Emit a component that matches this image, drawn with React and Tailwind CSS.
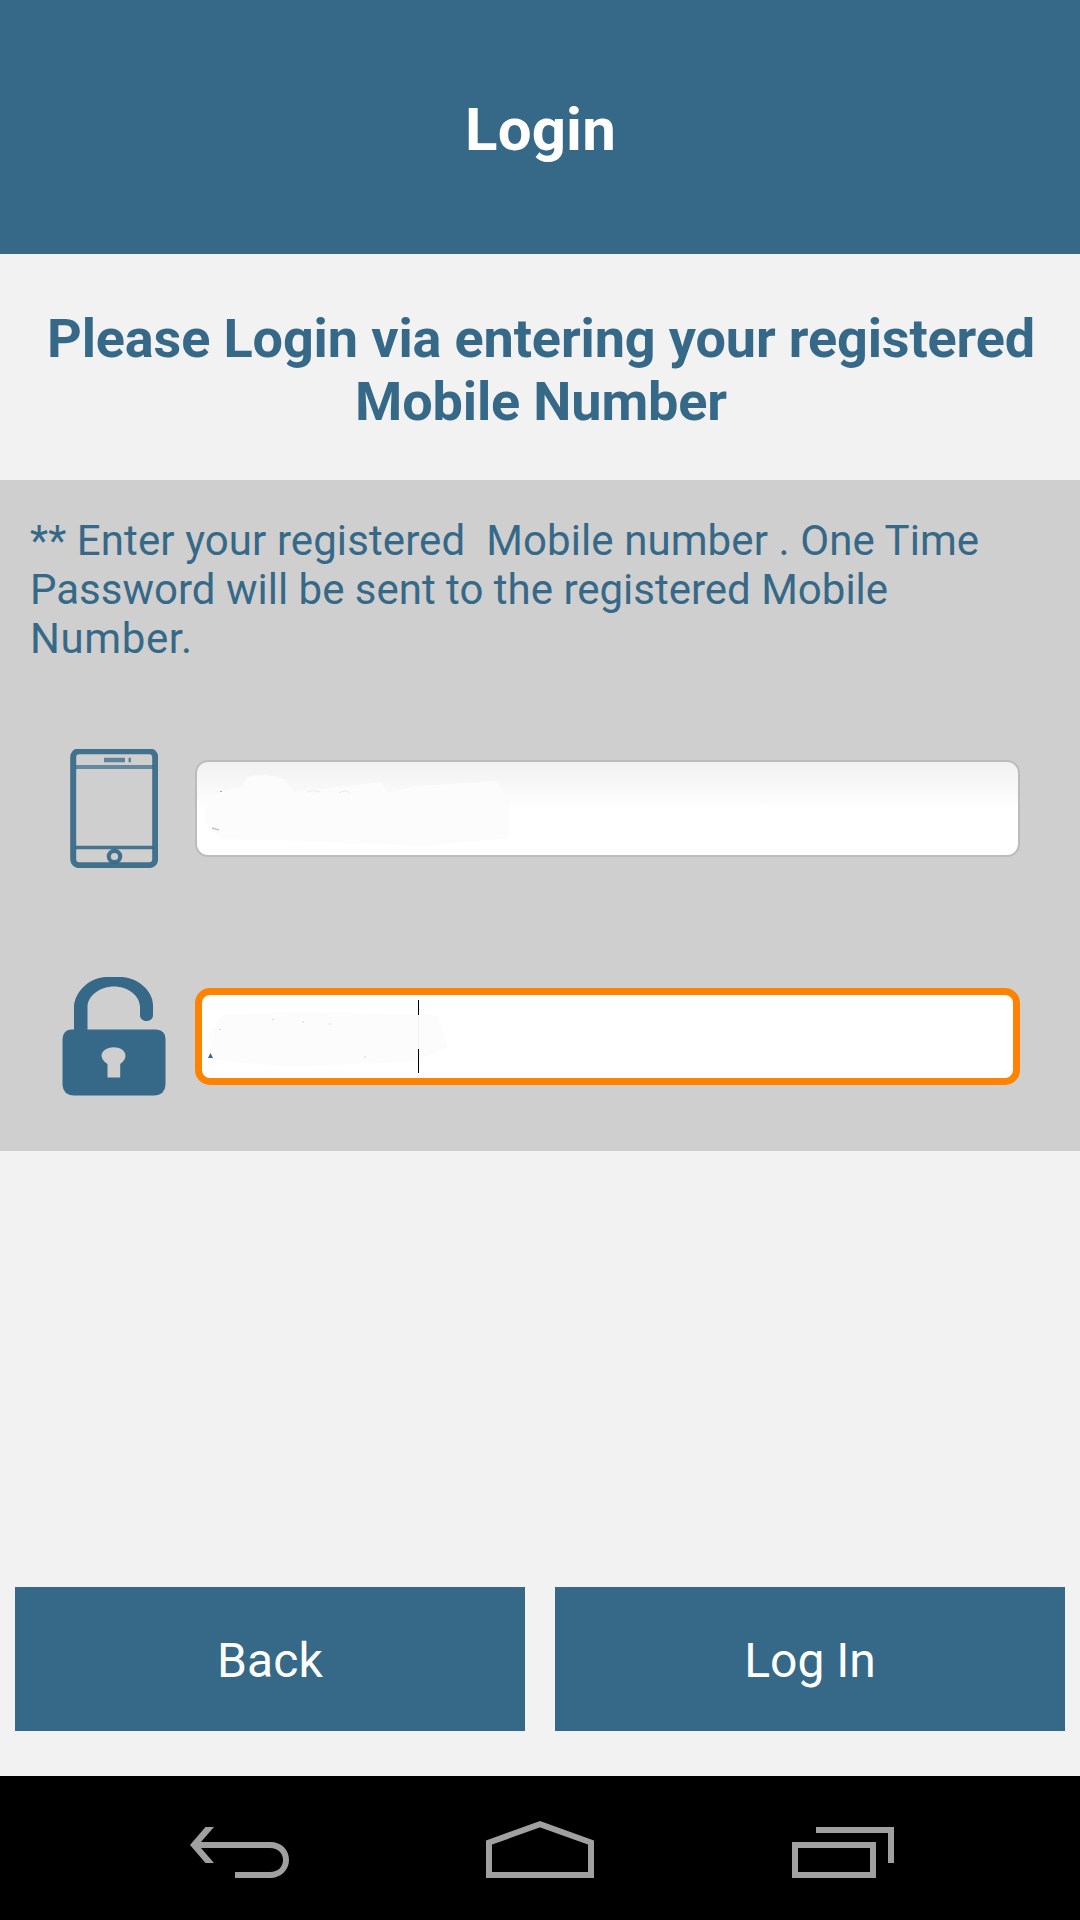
function PhoneIcon() {
  return (
    <svg width="88" height="119" viewBox="0 0 88 119" fill="none" stroke="#366988">
      <rect x="3.200" y="2.200" width="82" height="114" rx="6" strokeWidth="6" strokeOpacity=".92" />
      <path d="M5 18h79" strokeWidth="4" strokeOpacity=".7" />
      <path d="M5 98.500h79" strokeWidth="3.500" strokeOpacity=".9" />
      <path d="M34 11h21M58.500 11h2.500" strokeWidth="4.500" strokeOpacity=".75" />
      <circle cx="44.500" cy="107.500" r="5.700" strokeWidth="4.200" strokeOpacity=".92" />
    </svg>
  );
}

function UnlockIcon() {
  return (
    <svg width="104" height="119" viewBox="0 0 104 119" fill="#366988">
      <path d="M12 58V31C12 14 29 0 44 0H60C76 1 91 14 91 28V38C91 46 78 46 78 38V30C78 18 65 9.500 52 9.500S25.500 18 25.500 30V58Z" />
      <path
        d="M9 52.500H94Q103.500 53 103.500 62V108Q103 118 92 118.500H12Q1 118 0.500 108V62Q1 53 9 52.500ZM45.500 100.500H58.200V87Q63.500 83 63.500 79C63.500 73.500 58 70.200 51.500 70.200S39.500 74 39.500 79Q40 83.500 45.500 87Z"
        fillRule="evenodd"
      />
    </svg>
  );
}

function BackIcon() {
  return (
    <svg width="100" height="54" viewBox="0 0 100 54" fill="#a0a0a0">
      <path d="M0 18 15.500 0H24L11 15H80C92 15 99 23 99 33S91 51 80 51H45V45H80C88 45 93 40 93 33S88 21 80 21H11L24 36H15.500Z" />
    </svg>
  );
}

function HomeIcon() {
  return (
    <svg width="108" height="57" viewBox="0 0 108 57" fill="none" stroke="#a0a0a0" strokeWidth="6">
      <path d="M3 54V21.500L54 3.200 105 21.500V54Z" />
    </svg>
  );
}

function RecentsIcon() {
  return (
    <svg width="102" height="51" viewBox="0 0 102 51" fill="none" stroke="#a0a0a0" strokeWidth="6">
      <path d="M24 3H99V36M3 18H81V48H3Z" />
    </svg>
  );
}

export default function App() {
  return (
    <div className="flex h-[1920px] w-[1080px] flex-col bg-[#f2f2f2] font-['Roboto',sans-serif] text-[#366988]">
      <header className="flex h-[254px] items-center justify-center bg-[#366988] pt-[5px] pl-px text-[60px] font-bold tracking-[0.15px] text-white">Login</header>
      <h1 className="h-[226px] pt-[53px] pl-[2px] text-center text-[54px] leading-[63px] font-bold tracking-[-0.14px]">
        Please Login via entering your registered
        <br />
        Mobile Number
      </h1>
      <section className="h-[671px] bg-[#cfcfcf] pt-[36px]">
        <p className="px-[30px] text-[42px] leading-[49px] whitespace-pre">
          <span className="tracking-[0.09px]">{"** Enter your registered  Mobile number . One Time\n"}</span>
          {"Password will be sent to the registered Mobile\n"}
          <span className="tracking-[0.6px]">Number.</span>
        </p>
        <div className="mt-[86px] flex h-[119px] items-center">
          <div className="flex w-[195px] pl-[70px]">
            <PhoneIcon />
          </div>
          <div className="h-[97px] w-[825px] rounded-[13px] border-2 border-[#bcbcbc] bg-[linear-gradient(#f1f1f1,#fdfdfd_45%,#ffffff_50%)]">
            <svg width="340" height="93" viewBox="0 0 340 93">
              <path d="M10 34 45 25 50 15Q70 10 86 17L98 30 184 20 191 31 220 24 300 19 312 43V76L230 84 100 79 24 77 8 62Z" fill="#fcfcfc" />
              <path d="M110 30q7-3 13 0M142 31q6-4 11 0" fill="none" stroke="#e8ebed" />
              <path d="M15 66 22 68" stroke="#b4cad5" strokeWidth="1.500" />
              <path d="M23 29.500h2" stroke="#aaaaaa" />
            </svg>
          </div>
        </div>
        <div className="mt-[109px] flex h-[119px] items-center">
          <div className="flex w-[195px] pl-[62px]">
            <UnlockIcon />
          </div>
          <div className="h-[97px] w-[825px] rounded-[15px] border-[7px] border-[#ff8200] bg-white">
            <svg width="250" height="83" viewBox="0 0 250 83">
              <path d="M20 20 100 17 235 20 246 52 215 66 90 72 12 65 6 40Z" fill="#fcfcfc" />
              <path d="M6 63 8.500 58 11 63Z" fill="#366988" />
              <path d="M17 34.500h2M70 24.500h2M100 27h2M127 29h2M162 62h2" stroke="#d5d5d5" />
              <path d="M216.500 5V20M216.500 54V78" stroke="#000000" />
              <path d="M216.500 20V54" stroke="#f4f4f4" />
            </svg>
          </div>
        </div>
      </section>
      <div className="flex-1" />
      <div className="mb-[45px] flex h-[144px] gap-[30px] px-[15px] text-[48px] text-white">
        <button className="flex-1 bg-[#366988] pt-[3px] tracking-[0.1px]">Back</button>
        <button className="flex-1 bg-[#366988] pt-[3px]">Log In</button>
      </div>
      <nav className="flex h-[144px] items-start bg-black">
        <div className="w-[296px] shrink-0 pt-[51px] pl-[190px]"><BackIcon /></div>
        <div className="w-[496px] shrink-0 pt-[45px] pl-[190px]"><HomeIcon /></div>
        <div className="pt-[51px]"><RecentsIcon /></div>
      </nav>
    </div>
  );
}
